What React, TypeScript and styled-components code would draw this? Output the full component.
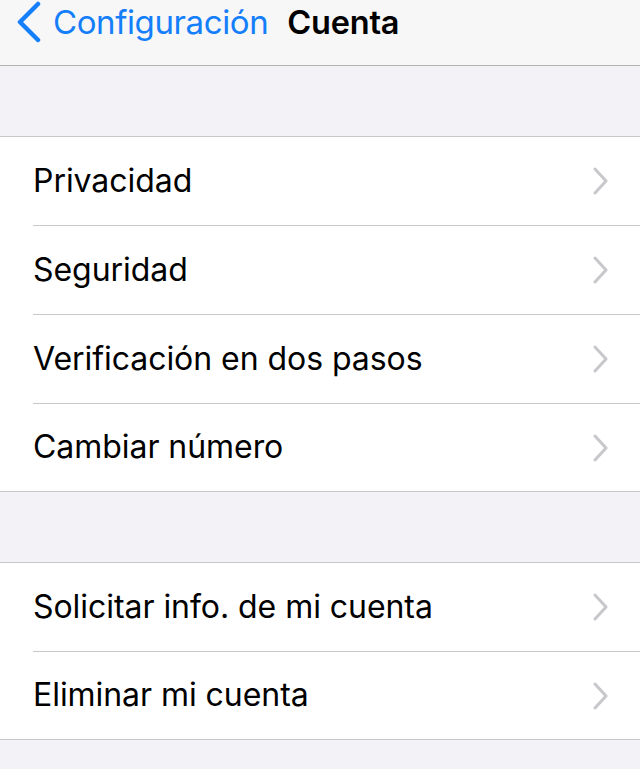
import styled, { createGlobalStyle } from "styled-components"

const GlobalStyle = createGlobalStyle`
	html, body {
		margin: 0;
		padding: 0;
		background: #f2f2f7;
	}
	body {
		font-family: Inter, "Noto Sans", "Liberation Sans", sans-serif;
		-webkit-font-smoothing: antialiased;
	}
`

const groups: string[][] = [
	["Privacidad", "Seguridad", "Verificación en dos pasos", "Cambiar número"],
	["Solicitar info. de mi cuenta", "Eliminar mi cuenta"],
]

const BackChevron = () => (
	<svg width="26" height="42" viewBox="0 0 26 42" fill="none">
		<path d="M22 3 L4 21 L22 39" stroke="#147efb" strokeWidth="4.5" strokeLinecap="round" strokeLinejoin="round" />
	</svg>
)

const RowChevron = () => (
	<svg width="16" height="28" viewBox="0 0 16 28" fill="none">
		<path d="M2 2 L13 14 L2 26" stroke="#c7c7cc" strokeWidth="3" strokeLinecap="round" strokeLinejoin="round" />
	</svg>
)

const App = () => {
	return (
		<>
			<GlobalStyle />
			<Page>
				<NavBar>
					<BackButton>
						<BackChevron />
						<BackLabel>Configuración</BackLabel>
					</BackButton>
					<NavTitle>Cuenta</NavTitle>
				</NavBar>
				{groups.map((items, i) => (
					<Group key={i}>
						{items.map((label, j) => (
							<Row key={label} $last={j === items.length - 1}>
								<RowLabel>{label}</RowLabel>
								<RowChevron />
							</Row>
						))}
					</Group>
				))}
			</Page>
		</>
	)
}

export default App

const Page = styled.div`
	width: 640px;
	min-height: 769px;
	background: #f2f2f7;
`

const NavBar = styled.div`
	height: 66px;
	display: flex;
	align-items: flex-start;
	gap: 19px;
	background: #f7f7f7;
	border-bottom: 1px solid #b2b2b2;
	padding-left: 16px;
	box-sizing: border-box;
`

const BackButton = styled.div`
	display: flex;
	align-items: center;
	gap: 11px;
	height: 44px;
`

const BackLabel = styled.span`
	color: #147efb;
	font-size: 33px;
	letter-spacing: -0.4px;
`

const NavTitle = styled.span`
	height: 44px;
	display: flex;
	align-items: center;
	color: #000;
	font-size: 32.5px;
	font-weight: 600;
	letter-spacing: -0.2px;
`

const Group = styled.div`
	margin-top: 70px;
	background: #fff;
	border-top: 1px solid #c8c7cc;
	border-bottom: 1px solid #c8c7cc;
`

const Row = styled.div<{ $last: boolean }>`
	height: ${(p) => (p.$last ? "87px" : "88px")};
	margin-left: 33px;
	padding-right: 31px;
	display: flex;
	align-items: center;
	justify-content: space-between;
	border-bottom: ${(p) => (p.$last ? "none" : "1px solid #c8c7cc")};
`

const RowLabel = styled.span`
	font-size: 32px;
	color: #000;
	letter-spacing: -0.05px;
	margin-top: -2px;
`
